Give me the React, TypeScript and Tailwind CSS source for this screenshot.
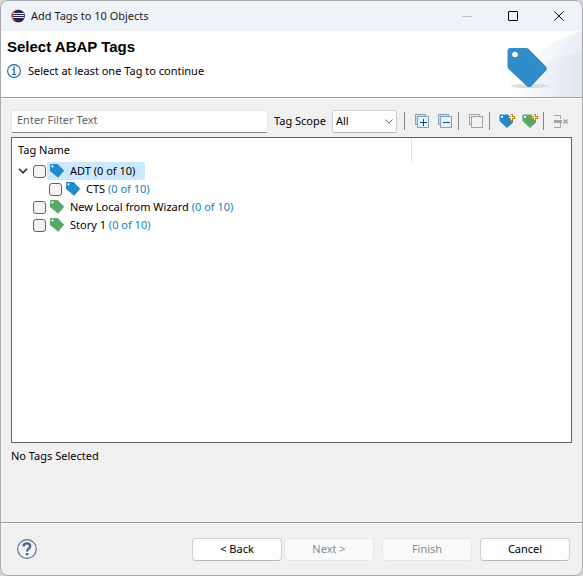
import React, { useState } from "react";
import { clsx } from "clsx";

const BLUE = "#218acb";
const GREEN = "#59a869";

function TagIcon({ color }: { color: string }) {
  return (
    <svg width="16" height="16" viewBox="0 0 16 16" aria-hidden="true" className="shrink-0">
      <path d="M1 2a1 1 0 0 1 1-1h6.6L15.2 7.8 9.2 14.8 1 8z" fill={color} />
      <circle cx="3.4" cy="3.4" r="1.1" fill="#fff" />
    </svg>
  );
}

function NewTagIcon({ color }: { color: string }) {
  return (
    <svg width="16" height="16" viewBox="0 0 16 16" aria-hidden="true">
      <path d="M0.5 2.5a1 1 0 0 1 1-1H9l5 5.5v2.5L8 15 0.5 8z" fill={color} />
      <circle cx="3" cy="3.8" r="1.1" fill="#fff" />
      <path
        d="M12 1h1v2h2v1h1v1h-1v1h-2v2h-1v1h-1V8h-1V6H9V5H8V4h1V3h2V1h1z"
        transform="translate(0.5 -0.5)"
        fill="#b5831a"
        shapeRendering="crispEdges"
      />
      <path d="M12.5 2v5M10 4.5h5" stroke="#fff6cf" shapeRendering="crispEdges" />
    </svg>
  );
}

function StackIcon({ sign }: { sign: "plus" | "minus" }) {
  return (
    <svg width="14" height="14" viewBox="0 0 14 14" aria-hidden="true" shapeRendering="crispEdges">
      <rect x="0.5" y="0.5" width="10" height="10" fill="#b9e0f3" stroke="#8a9fb8" />
      <rect x="2.5" y="2.5" width="11" height="11" fill="#e3f4fc" stroke="#8a9fb8" />
      <path d="M5 8.5h7" stroke="#0b4a80" />
      {sign === "plus" && <path d="M8.5 5v7" stroke="#0b4a80" />}
    </svg>
  );
}

function DeselectIcon() {
  return (
    <svg width="14" height="14" viewBox="0 0 14 14" aria-hidden="true" shapeRendering="crispEdges">
      <path d="M2 10.5H0.5V0.5h10V2" fill="none" stroke="#a3a3a3" />
      <rect x="2.5" y="2.5" width="11" height="11" fill="#f0f0f0" stroke="#a3a3a3" />
    </svg>
  );
}

function RemoveIcon() {
  return (
    <svg width="14" height="14" viewBox="0 0 14 14" aria-hidden="true" fill="none" stroke="#a3a3a3">
      <path d="M0 1.5h6.5V5M0 13.5h6.5V9" />
      <path d="M0 7.5h8" strokeWidth="3" />
      <path d="M9.5 5.5l4 4M13.5 5.5l-4 4" strokeWidth="1.6" />
    </svg>
  );
}

function ToolButton({ label, disabled, children }: { label: string; disabled?: boolean; children: React.ReactNode }) {
  return (
    <button type="button" aria-label={label} disabled={disabled} className="flex h-6 w-[23px] items-center justify-center">
      {children}
    </button>
  );
}

function Separator({ className }: { className?: string }) {
  return <span className={clsx("h-[18px] w-px bg-[#858585]", className)} />;
}

function EclipseLogo() {
  return (
    <svg width="14" height="14" viewBox="0 0 14 14" aria-hidden="true">
      <circle cx="6.4" cy="7" r="6.4" fill="#f7941e" />
      <circle cx="7.6" cy="7" r="6.3" fill="#2c2255" />
      <path d="M2 4.5h11M2 6.5h11M2 8.5h11" stroke="#e8e6f2" />
    </svg>
  );
}

function InfoIcon() {
  return (
    <svg width="14" height="14" viewBox="0 0 14 14" aria-hidden="true" fill="none" stroke="#1b66a5">
      <circle cx="7" cy="7" r="6.4" strokeWidth="1.1" fill="#f7fbfe" />
      <path d="M5.4 5.7h1.8v4.8M5.2 10.5h3.8" strokeWidth="1.2" />
      <path d="M6.2 3.6h1.6" strokeWidth="1.6" />
    </svg>
  );
}

function HelpIcon() {
  return (
    <svg width="20" height="20" viewBox="0 0 20 20" aria-hidden="true" fill="none">
      <circle cx="10" cy="10" r="9.3" fill="#f2f4f7" stroke="#5d6f92" strokeWidth="1.2" />
      <path d="M6.6 7.4C6.6 3.4 13.2 3.6 13.2 7.2c0 2.4-3.1 2.5-3.1 5.2" stroke="#4c6088" strokeWidth="2.3" />
      <path d="M8.8 14h2.6v2.2H8.8z" fill="#4c6088" />
    </svg>
  );
}

function HeaderArt() {
  return (
    <svg width="76" height="66" viewBox="0 0 76 66" aria-hidden="true" className="shrink-0">
      <defs>
        <linearGradient id="swoosh" x1="0" x2="1" y1="0" y2="0">
          <stop offset="0" stopColor="#e4e9f5" stopOpacity="0" />
          <stop offset="1" stopColor="#dce2f0" />
        </linearGradient>
      </defs>
      <path d="M76 0C44 9 14 28 0 66h76z" fill="url(#swoosh)" opacity="0.5" />
      <path d="M76 0C52 12 36 34 30 66h46z" fill="url(#swoosh)" opacity="0.3" />
      <path d="M76 22C48 24 20 40 8 66h68z" fill="url(#swoosh)" opacity="0.7" />
      <ellipse cx="24" cy="55" rx="19" ry="2" fill="#dcdcdc" />
      <path d="M1.5 20.5a3.5 3.5 0 0 1 3.5-3.5h15a4 4 0 0 1 2.7 1.1l17 17.2a3.4 3.4 0 0 1 0 4.8L25.5 55a3.4 3.4 0 0 1-4.8 0L2.8 38.3a4 4 0 0 1-1.3-2.9z" fill="#318dc9" />
      <circle cx="9" cy="23.5" r="2.8" fill="#fff" />
    </svg>
  );
}

type Row = { name: string; color: string; child?: boolean; expanded?: boolean; selected?: boolean };

const rows: Row[] = [
  { name: "ADT", color: BLUE, expanded: true, selected: true },
  { name: "CTS", color: BLUE, child: true },
  { name: "New Local from Wizard", color: GREEN },
  { name: "Story 1", color: GREEN },
];

function TreeRow({ row }: { row: Row }) {
  return (
    <li className={clsx("flex h-[18px] items-center", row.child && "pl-4")}>
      <span className="flex w-[21px] justify-center">
        {row.expanded && (
          <svg width="10" height="6" viewBox="0 0 10 6" fill="none" stroke="#2b2b2b" strokeWidth="1.6" aria-hidden="true">
            <path d="M1 0.8l4 4 4-4" />
          </svg>
        )}
      </span>
      <label className="flex h-full items-center">
        <input type="checkbox" className="size-[13px] appearance-none rounded-[3px] border border-[#626262] bg-[#f3f3f3] checked:bg-[#0067c0]" />
        <span className={clsx("ml-px flex h-full items-center gap-[5px] rounded-[2px] pr-[10px] pl-[2px]", row.selected && "bg-[#cce8ff]")}>
          <TagIcon color={row.color} />
          <span className="whitespace-nowrap">
            {row.name} <span className={row.selected ? "" : "text-[#1482b8]"}>(0 of 10)</span>
          </span>
        </span>
      </label>
    </li>
  );
}

function DialogButton({ children, disabled, className }: { children: string; disabled?: boolean; className?: string }) {
  return (
    <button
      type="button"
      disabled={disabled}
      className={clsx(
        "h-[23px] w-[90px] rounded-[4px] border",
        disabled ? "border-[#e6e6e6] bg-[#f9f9f9] text-[#8b8b8b]" : "border-[#d0d0d0] border-b-[#b8b8b8] bg-[#fdfdfd] text-black",
        className,
      )}
    >
      {children}
    </button>
  );
}

export default function App() {
  const [filter, setFilter] = useState("");
  return (
    <div className="flex min-h-screen bg-[#d6d6d6] font-['Noto_Sans','Open_Sans',sans-serif] text-[11px] leading-4 text-black">
      <div role="dialog" aria-labelledby="title" className="flex flex-1 flex-col overflow-hidden rounded-lg border border-[#a9a9a9] bg-[#f0f0f0]">
        <header className="flex h-[30px] items-center bg-[#eef3f9] pl-[10px]">
          <EclipseLogo />
          <span id="title" className="ml-[6px] flex-1 text-[#1a1a1a]">Add Tags to 10 Objects</span>
          <button type="button" aria-label="Minimize" disabled className="flex h-full w-[46px] items-center justify-center">
            <span className="h-px w-[10px] bg-[#bcc1c6]" />
          </button>
          <button type="button" aria-label="Maximize" className="flex h-full w-[46px] items-center justify-center">
            <span className="size-[10px] rounded-[1px] border border-black" />
          </button>
          <button type="button" aria-label="Close" className="flex h-full w-[46px] items-center justify-center">
            <svg width="10" height="10" viewBox="0 0 10 10" stroke="#111" aria-hidden="true">
              <path d="M0.3 0.3l9.4 9.4M9.7 0.3L0.3 9.7" />
            </svg>
          </button>
        </header>

        <section className="flex h-[67px] justify-between border-b border-[#9b9b9b] bg-white pl-[6px]">
          <div className="pt-2">
            <h1 className="font-['Liberation_Sans',Arial,sans-serif] text-[15px] leading-4 font-bold">Select ABAP Tags</h1>
            <p className="mt-2 flex items-center gap-[7px]">
              <InfoIcon />
              Select at least one Tag to continue
            </p>
          </div>
          <HeaderArt />
        </section>

        <main className="flex flex-1 flex-col border-t border-white px-[10px] pt-[10px]">
          <div className="flex h-[24px] items-center">
            <input
              type="text"
              aria-label="Filter"
              placeholder="Enter Filter Text"
              value={filter}
              onChange={(e) => setFilter(e.target.value)}
              className="h-[23px] min-w-0 flex-1 rounded-[2px] border border-[#e5e5e5] border-b-[#868686] bg-white px-[5px] pb-[3px] outline-none placeholder:text-[#5f5f5f]"
            />
            <label htmlFor="scope" className="ml-[6px] w-[58px] whitespace-nowrap">Tag Scope</label>
            <div className="relative h-[23px] w-[65px]">
              <select id="scope" className="size-full appearance-none rounded-[2px] border border-[#cfcfcf] border-b-[#b5b5b5] bg-[#fdfdfd] pl-[3px]">
                <option>All</option>
                <option>Global</option>
                <option>Local</option>
              </select>
              <svg width="8" height="5" viewBox="0 0 8 5" fill="none" stroke="#5c5c5c" aria-hidden="true" className="pointer-events-none absolute top-[9px] right-1">
                <path d="M0.4 0.5L4 4.2 7.6 0.5" />
              </svg>
            </div>
            <div role="toolbar" className="flex items-center pl-[7px]">
              <Separator />
              <span className="ml-[5px] flex">
                <ToolButton label="Expand All"><StackIcon sign="plus" /></ToolButton>
                <ToolButton label="Collapse All"><StackIcon sign="minus" /></ToolButton>
              </span>
              <Separator className="ml-[2px]" />
              <span className="ml-[5px] flex">
                <ToolButton label="Deselect All" disabled><DeselectIcon /></ToolButton>
              </span>
              <Separator className="ml-[2px]" />
              <span className="ml-[5px] flex">
                <ToolButton label="New Global Tag"><NewTagIcon color={BLUE} /></ToolButton>
                <ToolButton label="New Local Tag"><NewTagIcon color={GREEN} /></ToolButton>
              </span>
              <Separator className="ml-[2px]" />
              <span className="ml-[5px] flex">
                <ToolButton label="Remove" disabled><RemoveIcon /></ToolButton>
              </span>
            </div>
          </div>

          <div className="mt-[4px] min-h-[240px] flex-1 border border-[#626262] bg-white">
            <div className="flex h-6">
              <div className="flex flex-1 items-center border-r border-[#e5e5e5] pl-[6px]">Tag Name</div>
              <div className="w-[159px]" />
            </div>
            <ul>
              {rows.map((row) => (
                <TreeRow key={row.name} row={row} />
              ))}
            </ul>
          </div>
          <p className="mt-[5px] mb-[58px]">No Tags Selected</p>
        </main>

        <footer className="flex h-[53px] items-center border-t border-[#9b9b9b] pr-3 pl-4 shadow-[inset_0_1px_0_#ffffff]">
          <button type="button" aria-label="Help">
            <HelpIcon />
          </button>
          <div className="ml-auto flex">
            <DialogButton>&lt; Back</DialogButton>
            <DialogButton disabled className="ml-[2px]">Next &gt;</DialogButton>
            <DialogButton disabled className="ml-2">Finish</DialogButton>
            <DialogButton className="ml-2">Cancel</DialogButton>
          </div>
        </footer>
      </div>
    </div>
  );
}
